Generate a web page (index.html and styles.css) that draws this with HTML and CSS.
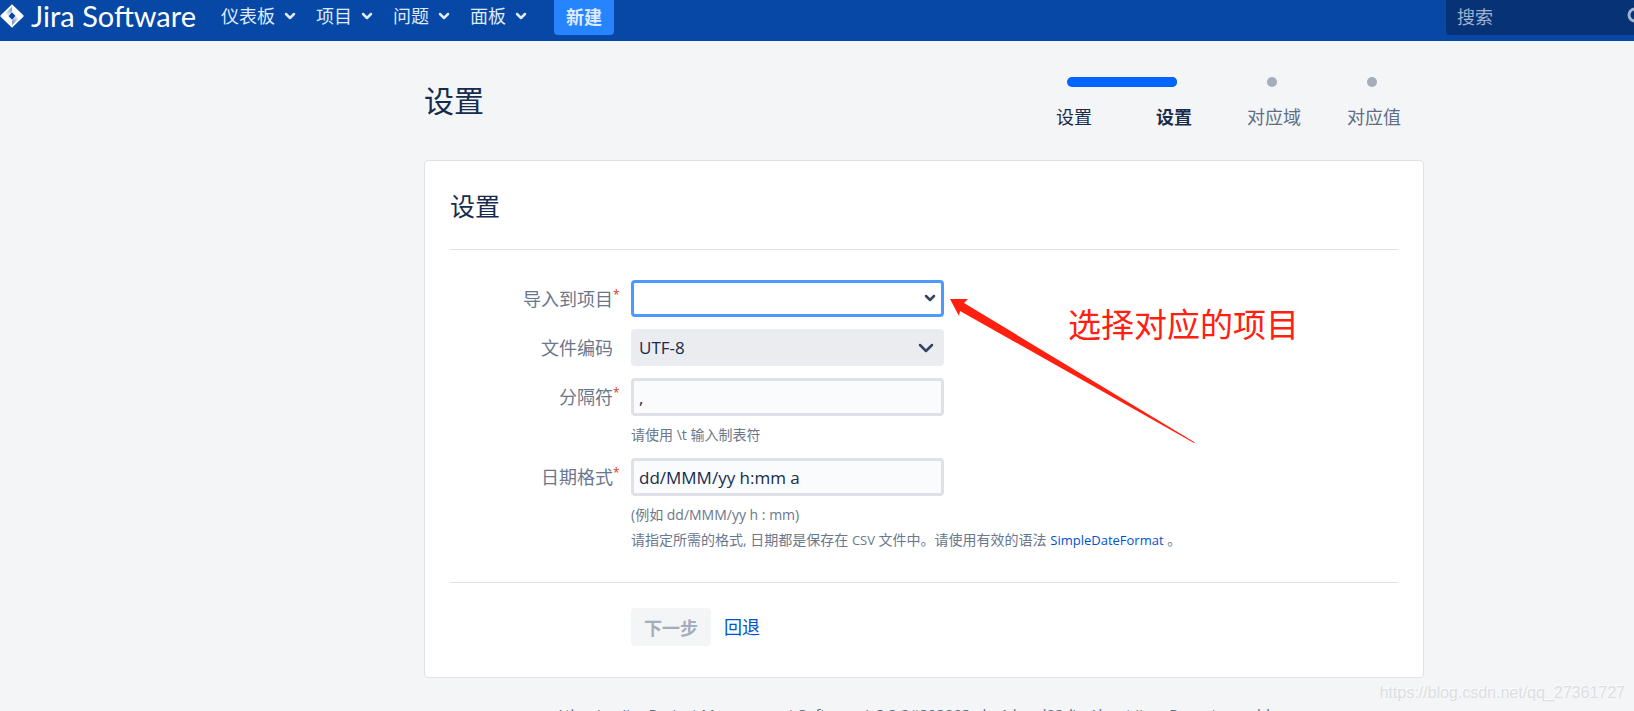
FILE: index.html
```html
<!DOCTYPE html>
<html lang="zh-CN">
<head>
<meta charset="utf-8">
<title>设置 - Jira Software</title>
<link rel="stylesheet" href="styles.css">
</head>
<body>
<header class="header">
  <a class="logo" href="#">
    <svg class="logo-mark" viewBox="0 0 26 26" aria-hidden="true">
      <defs>
        <linearGradient id="fade-a" x1="12" y1="6" x2="6" y2="12" gradientUnits="userSpaceOnUse"><stop offset="0" stop-color="#7b9dd0"/><stop offset="1" stop-color="#fff"/></linearGradient>
        <linearGradient id="fade-b" x1="13" y1="19" x2="19" y2="13" gradientUnits="userSpaceOnUse"><stop offset="0" stop-color="#7b9dd0"/><stop offset="1" stop-color="#fff"/></linearGradient>
      </defs>
      <path fill="#fff" fill-rule="evenodd" d="M12.500.7 24.300 12.200Q25 13 24.300 13.800L12.500 25.300.7 13.800Q0 13 .7 12.200ZM12.500 9.200 8.800 13l3.700 3.800 3.700-3.800Z"/>
      <path fill="url(#fade-a)" d="M12.500 3.500v5.700L8.800 13 6 10Z"/>
      <path fill="url(#fade-b)" d="M12.500 22.500v-5.700L16.200 13l2.800 3Z"/>
    </svg>
    <span>Jira Software</span>
  </a>
  <nav class="nav">
    <a href="#">仪表板<svg class="caret" viewBox="0 0 12 8" aria-hidden="true"><path d="M2 2l4 4 4-4"/></svg></a>
    <a href="#">项目<svg class="caret" viewBox="0 0 12 8" aria-hidden="true"><path d="M2 2l4 4 4-4"/></svg></a>
    <a href="#">问题<svg class="caret" viewBox="0 0 12 8" aria-hidden="true"><path d="M2 2l4 4 4-4"/></svg></a>
    <a href="#">面板<svg class="caret" viewBox="0 0 12 8" aria-hidden="true"><path d="M2 2l4 4 4-4"/></svg></a>
  </nav>
  <button class="create" type="button">新建</button>
  <div class="search">
    <input type="search" placeholder="搜索" aria-label="搜索">
    <svg class="search-icon" viewBox="0 0 20 20" aria-hidden="true"><circle cx="8" cy="8" r="6"/><path d="M12.500 12.500 18 18"/></svg>
  </div>
</header>

<main class="page">
  <div class="page-head">
    <h1>设置</h1>
    <ol class="steps">
      <li class="step done">设置</li>
      <li class="step current" aria-current="step">设置</li>
      <li class="step">对应域</li>
      <li class="step">对应值</li>
    </ol>
  </div>

  <form class="card">
    <h2>设置</h2>
    <div class="fields">
      <div class="row">
        <label for="project">导入到项目<span class="req">*</span></label>
        <div class="control">
          <div class="pick">
            <select id="project" class="box focused"><option></option></select>
            <svg class="arrow small" viewBox="0 0 12 8" aria-hidden="true"><path d="M2 2l4 4 4-4"/></svg>
          </div>
        </div>
      </div>
      <div class="row">
        <label for="encoding">文件编码<span class="req"></span></label>
        <div class="control">
          <div class="pick">
            <select id="encoding" class="box filled"><option>UTF-8</option></select>
            <svg class="arrow" viewBox="0 0 16 10" aria-hidden="true"><path d="M2 2l6 6 6-6"/></svg>
          </div>
        </div>
      </div>
      <div class="row">
        <label for="delimiter">分隔符<span class="req">*</span></label>
        <div class="control">
          <input id="delimiter" class="box" type="text" value=",">
          <p class="hint">请使用 \t 输入制表符</p>
        </div>
      </div>
      <div class="row">
        <label for="date">日期格式<span class="req">*</span></label>
        <div class="control">
          <input id="date" class="box" type="text" value="dd/MMM/yy h:mm a">
          <p class="hint">(例如 dd/MMM/yy h : mm)</p>
          <p class="hint">请指定所需的格式, 日期都是保存在 <span class="latin">CSV</span> 文件中。请使用有效的语法 <a class="latin" href="#">SimpleDateFormat</a> 。</p>
        </div>
      </div>
    </div>
    <div class="actions">
      <button class="next" type="submit" disabled>下一步</button>
      <a href="#">回退</a>
    </div>
    <svg class="pointer" viewBox="0 0 246 146" aria-hidden="true"><path d="M0 0 18 0 14 4 245 143.500 244 144 10 12 9 17Z"/></svg>
    <p class="note">选择对应的项目</p>
  </form>
  <footer class="footer">Atlassian Jira Project Management Software (v8.2.2#802003-sha1:bcad92d) · About Jira · Report a problem</footer>
</main>
<div class="watermark">https://blog.csdn.net/qq_27361727</div>
</body>
</html>
```
FILE: styles.css
```css
* { box-sizing: border-box; }

html, body { height: 100%; }

body {
  margin: 0;
  overflow: hidden;
  position: relative;
  background: #f4f5f7;
  color: #172b4d;
  font: 18px/24px "Open Sans", "Noto Sans CJK SC", sans-serif;
}

a { color: #0052cc; text-decoration: none; }
h1, h2, p, ol { margin: 0; padding: 0; font-weight: 400; }
input, select, button { font: inherit; color: inherit; margin: 0; }

.header {
  display: flex;
  align-items: flex-start;
  height: 41px;
  background: #0747a6;
  color: #deebff;
}
.header a { color: #deebff; }
.header .logo {
  display: flex;
  align-items: center;
  gap: 6px;
  height: 32px;
  color: #fff;
  font: 29px/32px Lato, sans-serif;
}
.logo-mark { width: 25px; height: 26px; }
.nav { display: flex; gap: 20px; margin-left: 25px; }
.nav a { display: flex; align-items: center; gap: 9px; height: 32px; }
.caret { width: 12px; height: 8px; }
.caret path, .arrow path {
  fill: none;
  stroke: #deebff;
  stroke-width: 2.500;
  stroke-linecap: round;
  stroke-linejoin: round;
}
.create {
  margin-left: 27px;
  width: 60px;
  height: 35px;
  padding: 0 0 2px;
  border: 0;
  border-radius: 0 0 4px 4px;
  background: #2684ff;
  color: #deebff;
  font-weight: 700;
}
.search { position: relative; margin-left: auto; width: 188px; height: 35px; overflow: hidden; }
.search input {
  width: 100%;
  height: 100%;
  padding: 0 11px 2px;
  border: 0;
  border-radius: 0 0 0 4px;
  background: #083276;
}
.search input::placeholder { color: #a0b3d0; opacity: 1; }
.search-icon { position: absolute; right: -13px; top: 7px; width: 20px; height: 20px; fill: none; stroke: #a0b3d0; stroke-width: 3; }

.page { padding-left: 424px; }
.page-head {
  display: flex;
  justify-content: space-between;
  align-items: center;
  max-width: 1000px;
  height: 119px;
}
h1 { font-size: 30px; line-height: 40px; }
.steps { display: grid; grid-template-columns: repeat(4, 100px); list-style: none; padding-top: 4px; }
.step { position: relative; padding-top: 28px; text-align: center; color: #5e6c84; }
.step::before {
  content: "";
  position: absolute;
  top: 0;
  left: 43px;
  width: 10px;
  height: 10px;
  border-radius: 5px;
  background: #a5adba;
}
.step.done { color: #172b4d; }
.step.done::before { width: 110px; background: #0065ff; }
.step.current { color: #172b4d; font-weight: 700; }
.step.current::before { background: #0065ff; }

.card {
  position: relative;
  max-width: 1000px;
  padding: 25px;
  background: #fff;
  border: 1px solid #dfe1e6;
  border-radius: 4px;
}
h2 { padding: 3px 0 25px; border-bottom: 1px solid #dfe1e6; font-size: 25px; line-height: 35px; }
.fields { padding: 30px 0 32px; border-bottom: 1px solid #dfe1e6; }
.row { display: flex; margin-bottom: 12px; }
.row:last-child { margin-bottom: 0; }
.row label { display: flex; justify-content: flex-end; width: 169px; padding-top: 7px; color: #6b778c; }
.req { width: 6px; color: #de350b; font-size: 12px; line-height: 16px; }
.control { flex: 1; margin-left: 12px; }
.box {
  display: block;
  width: 313px;
  height: 38px;
  padding: 1px 5px 0;
  border: 3px solid #dfe1e6;
  border-radius: 4px;
  background: #fafbfc;
  font-size: 17px;
  appearance: none;
  outline: 0;
}
.pick .box { height: 37px; }
.box.focused { background: #fff; border-color: #4c9aff; }
.box.filled { background: #ebecf0; border-color: #ebecf0; }
.pick { position: relative; width: 313px; }
.arrow { position: absolute; right: 10px; top: 14px; width: 16px; height: 10px; }
.arrow.small { right: 8px; width: 12px; height: 8px; }
.arrow path { stroke: #344563; }
.hint { margin-top: 5px; font-size: 14px; line-height: 20px; color: #6b778c; }
.latin { font-size: 13px; }
.box + .hint { margin-top: 9px; }
.box + .hint:last-child { margin-bottom: 1px; }

.actions { display: flex; align-items: center; gap: 13px; padding: 25px 0 6px 181px; }
.next {
  width: 80px;
  height: 38px;
  padding: 2px 0 0;
  border: 0;
  border-radius: 4px;
  background: #f4f5f7;
  color: #a5adba;
  font-weight: 700;
}
.pointer { position: absolute; left: 525px; top: 138px; width: 246px; height: 146px; fill: #ff2010; }
.note { position: absolute; left: 643px; top: 142px; color: #ff2010; font-size: 33px; line-height: 44px; }

.footer { max-width: 1000px; margin-top: 24px; text-align: center; font-size: 15px; line-height: 24px; color: #5e6c84; white-space: nowrap; }
.watermark { position: absolute; right: 9px; bottom: 8px; color: #dcdee2; text-shadow: -1px -1px 0 #fcfcfd; font: 16px/20px "Liberation Sans", sans-serif; }
```
